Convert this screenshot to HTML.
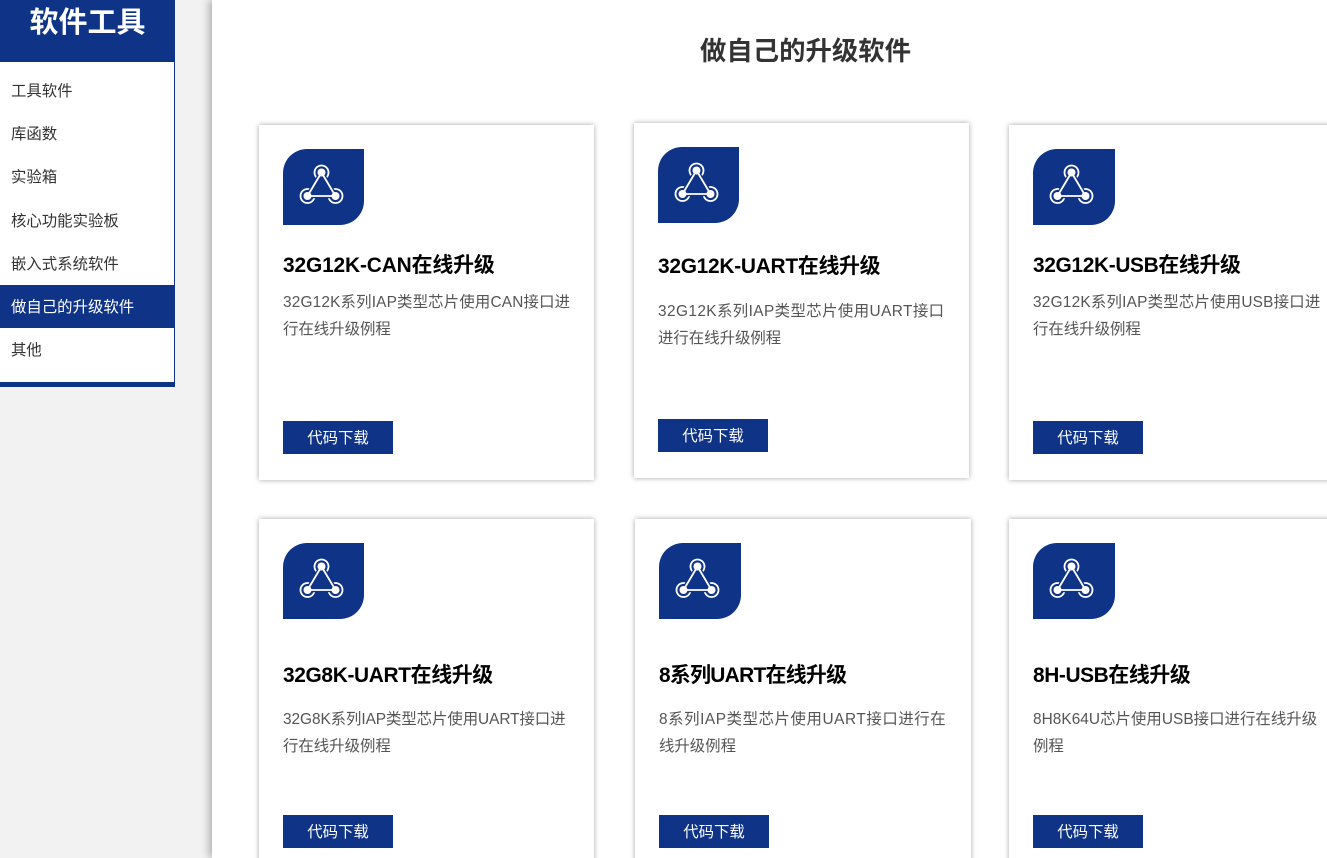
<!DOCTYPE html>
<html lang="zh-CN">
<head>
<meta charset="utf-8">
<title>做自己的升级软件</title>
<style>
*{box-sizing:border-box;margin:0;padding:0}
html,body{width:1327px;height:858px;overflow:hidden}
body{background:#f2f2f2;position:relative;font-family:"Liberation Sans","Noto Sans CJK SC",sans-serif;color:#333}
.side,.head,.item,.main,.title,.card,.ic,.t,.d,.b{position:absolute}
.side{left:0;top:0;width:175px;height:387px;background:#fff;border-right:1px solid #0f3386;border-bottom:5px solid #0f3386}
.head{left:0;top:0;width:175px;height:62px;background:#0f3386;color:#fff;font-size:29px;font-weight:700;text-align:center;line-height:47px}
.item{left:0;width:174px;height:43px;line-height:45px;padding-left:11px;font-size:15.4px;color:#333;white-space:nowrap}
.item.on{background:#0f3386;color:#fff}
.main{left:212px;top:0;width:1115px;height:858px;background:#fff;box-shadow:-3px 0 8px rgba(0,0,0,.28)}
.title{left:212px;top:31px;width:1187px;text-align:center;font-size:26.4px;line-height:40px;font-weight:700;color:#333}
.card{width:335px;height:355px;background:#fff;box-shadow:0 0 5px rgba(0,0,0,.35)}
.ic{left:24px;top:24px;width:81px;height:76px;background:#0f3386;border-radius:24px 0 24px 0}
.ic svg{position:absolute;left:0;top:0}
.t{left:24px;font-size:20.9px;line-height:30px;font-weight:700;color:#000;white-space:nowrap}
.d{left:24px;width:300px;font-size:15.4px;line-height:27px;color:#555;white-space:nowrap}
.b{left:24px;width:110px;height:33px;background:#0f3386;color:#fff;font-size:15.4px;line-height:35px;text-align:center}
</style>
</head>
<body>
<div class="side">
<div class="head">软件工具</div>
<div class="item" style="top:69px">工具软件</div>
<div class="item" style="top:112px">库函数</div>
<div class="item" style="top:155px">实验箱</div>
<div class="item" style="top:199px">核心功能实验板</div>
<div class="item" style="top:242px">嵌入式系统软件</div>
<div class="item on" style="top:285px">做自己的升级软件</div>
<div class="item" style="top:328px">其他</div>
</div>
<div class="main"></div>
<div class="title">做自己的升级软件</div>

<svg width="0" height="0" style="position:absolute"><defs>
<g id="n">
<g fill="none" stroke="#fff" stroke-width="1.8"><circle cx="38.5" cy="23.5" r="7"/><circle cx="24.5" cy="47" r="7"/><circle cx="52.5" cy="47" r="7"/></g>
<path d="M38.5 23.5L24.5 47H52.5Z" fill="#0f3386" stroke="#0f3386" stroke-width="4.5" stroke-linejoin="round"/>
<path d="M38.5 23.5L24.5 47H52.5Z" fill="none" stroke="#fff" stroke-width="1.8"/>
<g fill="#fff"><circle cx="38.5" cy="23.5" r="4"/><circle cx="24.5" cy="47" r="4"/><circle cx="52.5" cy="47" r="4"/></g>
</g></defs></svg>

<div class="card" style="left:259px;top:125px">
<div class="ic"><svg width="81" height="76"><use href="#n"/></svg></div>
<div class="t" style="top:126px;letter-spacing:-.14px">32G12K-CAN在线升级</div>
<div class="d" style="top:164px"><span style="letter-spacing:.18px">32G12K系列IAP类型芯片使用CAN接口进</span><br>行在线升级例程</div>
<div class="b" style="top:296px">代码下载</div>
</div>
<div class="card" style="left:634px;top:123px">
<div class="ic"><svg width="81" height="76"><use href="#n"/></svg></div>
<div class="t" style="top:129px;letter-spacing:-.27px">32G12K-UART在线升级</div>
<div class="d" style="top:175px"><span style="letter-spacing:.42px">32G12K系列IAP类型芯片使用UART接口</span><br>进行在线升级例程</div>
<div class="b" style="top:296px">代码下载</div>
</div>
<div class="card" style="left:1009px;top:125px">
<div class="ic" style="width:82px"><svg width="81" height="76"><use href="#n"/></svg></div>
<div class="t" style="top:126px;letter-spacing:-.35px">32G12K-USB在线升级</div>
<div class="d" style="top:164px"><span style="letter-spacing:.23px">32G12K系列IAP类型芯片使用USB接口进</span><br>行在线升级例程</div>
<div class="b" style="top:296px">代码下载</div>
</div>
<div class="card" style="left:259px;top:519px">
<div class="ic"><svg width="81" height="76"><use href="#n"/></svg></div>
<div class="t" style="top:142px;letter-spacing:-.35px">32G8K-UART在线升级</div>
<div class="d" style="top:187px"><span style="letter-spacing:-.05px">32G8K系列IAP类型芯片使用UART接口进</span><br>行在线升级例程</div>
<div class="b" style="top:296px">代码下载</div>
</div>
<div class="card" style="left:635px;top:519px;width:336px">
<div class="ic" style="width:82px"><svg width="81" height="76"><use href="#n"/></svg></div>
<div class="t" style="top:142px;letter-spacing:-.7px">8系列UART在线升级</div>
<div class="d" style="top:187px"><span style="letter-spacing:.58px">8系列IAP类型芯片使用UART接口进行在</span><br>线升级例程</div>
<div class="b" style="top:296px">代码下载</div>
</div>
<div class="card" style="left:1009px;top:519px">
<div class="ic" style="width:82px"><svg width="81" height="76"><use href="#n"/></svg></div>
<div class="t" style="top:142px;letter-spacing:-.4px">8H-USB在线升级</div>
<div class="d" style="top:187px"><span style="letter-spacing:.05px">8H8K64U芯片使用USB接口进行在线升级</span><br>例程</div>
<div class="b" style="top:296px">代码下载</div>
</div>
</body>
</html>
